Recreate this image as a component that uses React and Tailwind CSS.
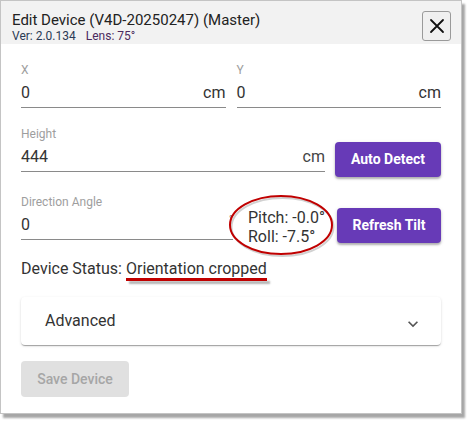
import React from "react";

const font = { fontFamily: "Roboto, 'Liberation Sans', sans-serif" };

const Field = ({ label, value, suffix, className }) => (
  <div className={className}>
    <div className="h-[14px] text-[12px] leading-[14px] text-[#9e9e9e]">{label}</div>
    <div className="flex items-center justify-between pt-[6px] pb-[5px] border-b border-[#8a8a8a] text-[16px] leading-[19px] text-[#333]">
      <span>{value}</span>
      {suffix}
    </div>
  </div>
);

const PurpleButton = ({ children, className }) => (
  <button
    className={
      "h-[35px] rounded-[4px] bg-[#673ab7] text-white text-[14px] font-bold shadow-[0_2px_2px_rgba(0,0,0,0.25),0_1px_4px_rgba(0,0,0,0.12)] " +
      className
    }
  >
    {children}
  </button>
);

export default function App() {
  return (
    <div className="w-[468px] h-[424px] bg-white" style={font}>
      <div className="w-[462px] h-[414px] bg-white border border-[#c4c4c4] shadow-[3px_4px_2px_rgba(0,0,0,0.35)] flex flex-col">
        {/* header */}
        <div className="h-[51px] bg-[#f2f2f2] flex justify-between items-start pl-[11px] pr-[10px]">
          <div className="pt-[10px]">
            <div className="text-[15px] leading-[18px] text-[#222]">Edit Device (V4D-20250247) (Master)</div>
            <div className="text-[12px] leading-[14px]">
              <span className="text-[#2b3a55]">Ver: 2.0.134</span>
              <span className="ml-[10px] text-[#4b2a5e]">Lens: 75°</span>
            </div>
          </div>
          <button className="mt-[10px] w-[29px] h-[30px] rounded-[3px] border border-[#9a9a9a] bg-[#f0f0f0] flex items-center justify-center">
            <svg width="16" height="16" viewBox="0 0 16 16">
              <path d="M2 2 L14 14 M14 2 L2 14" stroke="#111" strokeWidth="1.8" strokeLinecap="round" />
            </svg>
          </button>
        </div>

        {/* body */}
        <div className="px-[20px] pt-[19px] pb-[16px] flex flex-col">
          <div className="grid grid-cols-2 gap-[11px]">
            <Field label="X" value="0" suffix={<span>cm</span>} />
            <Field label="Y" value="0" suffix={<span>cm</span>} />
          </div>

          <div className="flex items-start mt-[19px]">
            <Field
              className="w-[304px]"
              label="Height"
              value="444"
              suffix={<span className="text-[#444]">cm</span>}
            />
            <PurpleButton className="ml-auto mt-[15px] w-[106px]">Auto Detect</PurpleButton>
          </div>

          <div className="flex items-start mt-[18px]">
            <Field
              className="w-[212px]"
              label="Direction Angle"
              value="0"
              suffix={<span className="text-[11px] leading-[11px] -mt-[10px] text-[#666]">°</span>}
            />
            <div className="relative ml-[15px] mt-[13px] text-[16px] leading-[19px] text-[#333]">
              <div>Pitch: -0.0°</div>
              <div>Roll: -7.5°</div>
              <svg
                className="absolute left-[-20px] top-[-14px]"
                width="108"
                height="64"
                viewBox="0 0 108 64"
              >
                <ellipse cx="53" cy="31" rx="51" ry="29" fill="none" stroke="rgba(0,0,0,0.18)" strokeWidth="2" transform="translate(1.5 2)" />
                <ellipse cx="53" cy="31" rx="51" ry="29" fill="none" stroke="#c00000" strokeWidth="2" />
              </svg>
            </div>
            <PurpleButton className="ml-auto mt-[13px] w-[104px]">Refresh Tilt</PurpleButton>
          </div>

          <div className="mt-[13px] text-[16px] leading-[19px] text-[#333]">
            Device Status:{" "}
            <span className="relative">
              Orientation cropped
              <span className="absolute left-0 right-0 top-[19px] h-[3px] bg-[#c00000] shadow-[3px_3px_2px_rgba(0,0,0,0.3)]"></span>
            </span>
          </div>

          <div className="mt-[19px] h-[48px] rounded-[4px] bg-white shadow-[0_2px_1px_-1px_rgba(0,0,0,0.2),0_1px_1px_0_rgba(0,0,0,0.14),0_1px_3px_0_rgba(0,0,0,0.12)] flex items-center pl-[24px] pr-[18px]">
            <span className="text-[16px] text-[#333]">Advanced</span>
            <svg className="ml-auto mt-[5px]" width="20" height="20" viewBox="0 0 24 24">
              <path d="M16.59 8.59 12 13.17 7.41 8.59 6 10l6 6 6-6z" fill="#555" />
            </svg>
          </div>

          <div className="mt-[16px]">
            <button className="w-[108px] h-[36px] rounded-[4px] bg-[#e0e0e0] text-[#a6a6a6] text-[14px] font-medium">
              Save Device
            </button>
          </div>
        </div>
      </div>
    </div>
  );
}
